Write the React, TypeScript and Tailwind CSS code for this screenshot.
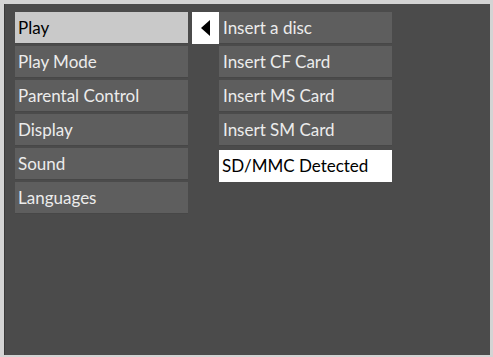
const leftItems = ["Play", "Play Mode", "Parental Control", "Display", "Sound", "Languages"];
const rightItems = ["Insert a disc", "Insert CF Card", "Insert MS Card", "Insert SM Card"];

export default function App() {
  return (
    <div className="w-[493px] h-[357px] bg-[#d4d4d4] pt-[4px] pl-[4px] font-['Lato','Open_Sans',sans-serif]">
      <div className="w-[486px] h-[351px] bg-[#4b4b4b] border-l border-[#3a3a3a] pl-[10px] pt-[8px] flex">
        {/* Main menu */}
        <div className="w-[173px] flex flex-col gap-[2px]">
          {leftItems.map((item, i) => (
            <div
              key={item}
              className={`h-[32px] flex items-center pl-[3px] text-[17px] border-b border-[#474747] ${
                i === 0 ? "bg-[#c9c9c9] text-black" : "bg-[#5e5e5e] text-[#ececec]"
              }`}
            >
              {item}
            </div>
          ))}
        </div>

        {/* Arrow marker */}
        <div className="ml-[4px] w-[27px] h-[32px] bg-white flex items-center justify-center">
          <svg width="10" height="16" viewBox="0 0 10 16">
            <path d="M9 0 L0 8 L9 16 Z" fill="#000" />
          </svg>
        </div>

        {/* Sub menu */}
        <div className="w-[173px] flex flex-col gap-[2px]">
          {rightItems.map((item) => (
            <div
              key={item}
              className="h-[32px] flex items-center pl-[4px] text-[17px] bg-[#5e5e5e] text-[#ececec] border-b border-[#474747]"
            >
              {item}
            </div>
          ))}
          <div className="mt-[2px] h-[32px] flex items-center pl-[3px] text-[17px] bg-white text-black">
            SD/MMC Detected
          </div>
        </div>
      </div>
    </div>
  );
}
